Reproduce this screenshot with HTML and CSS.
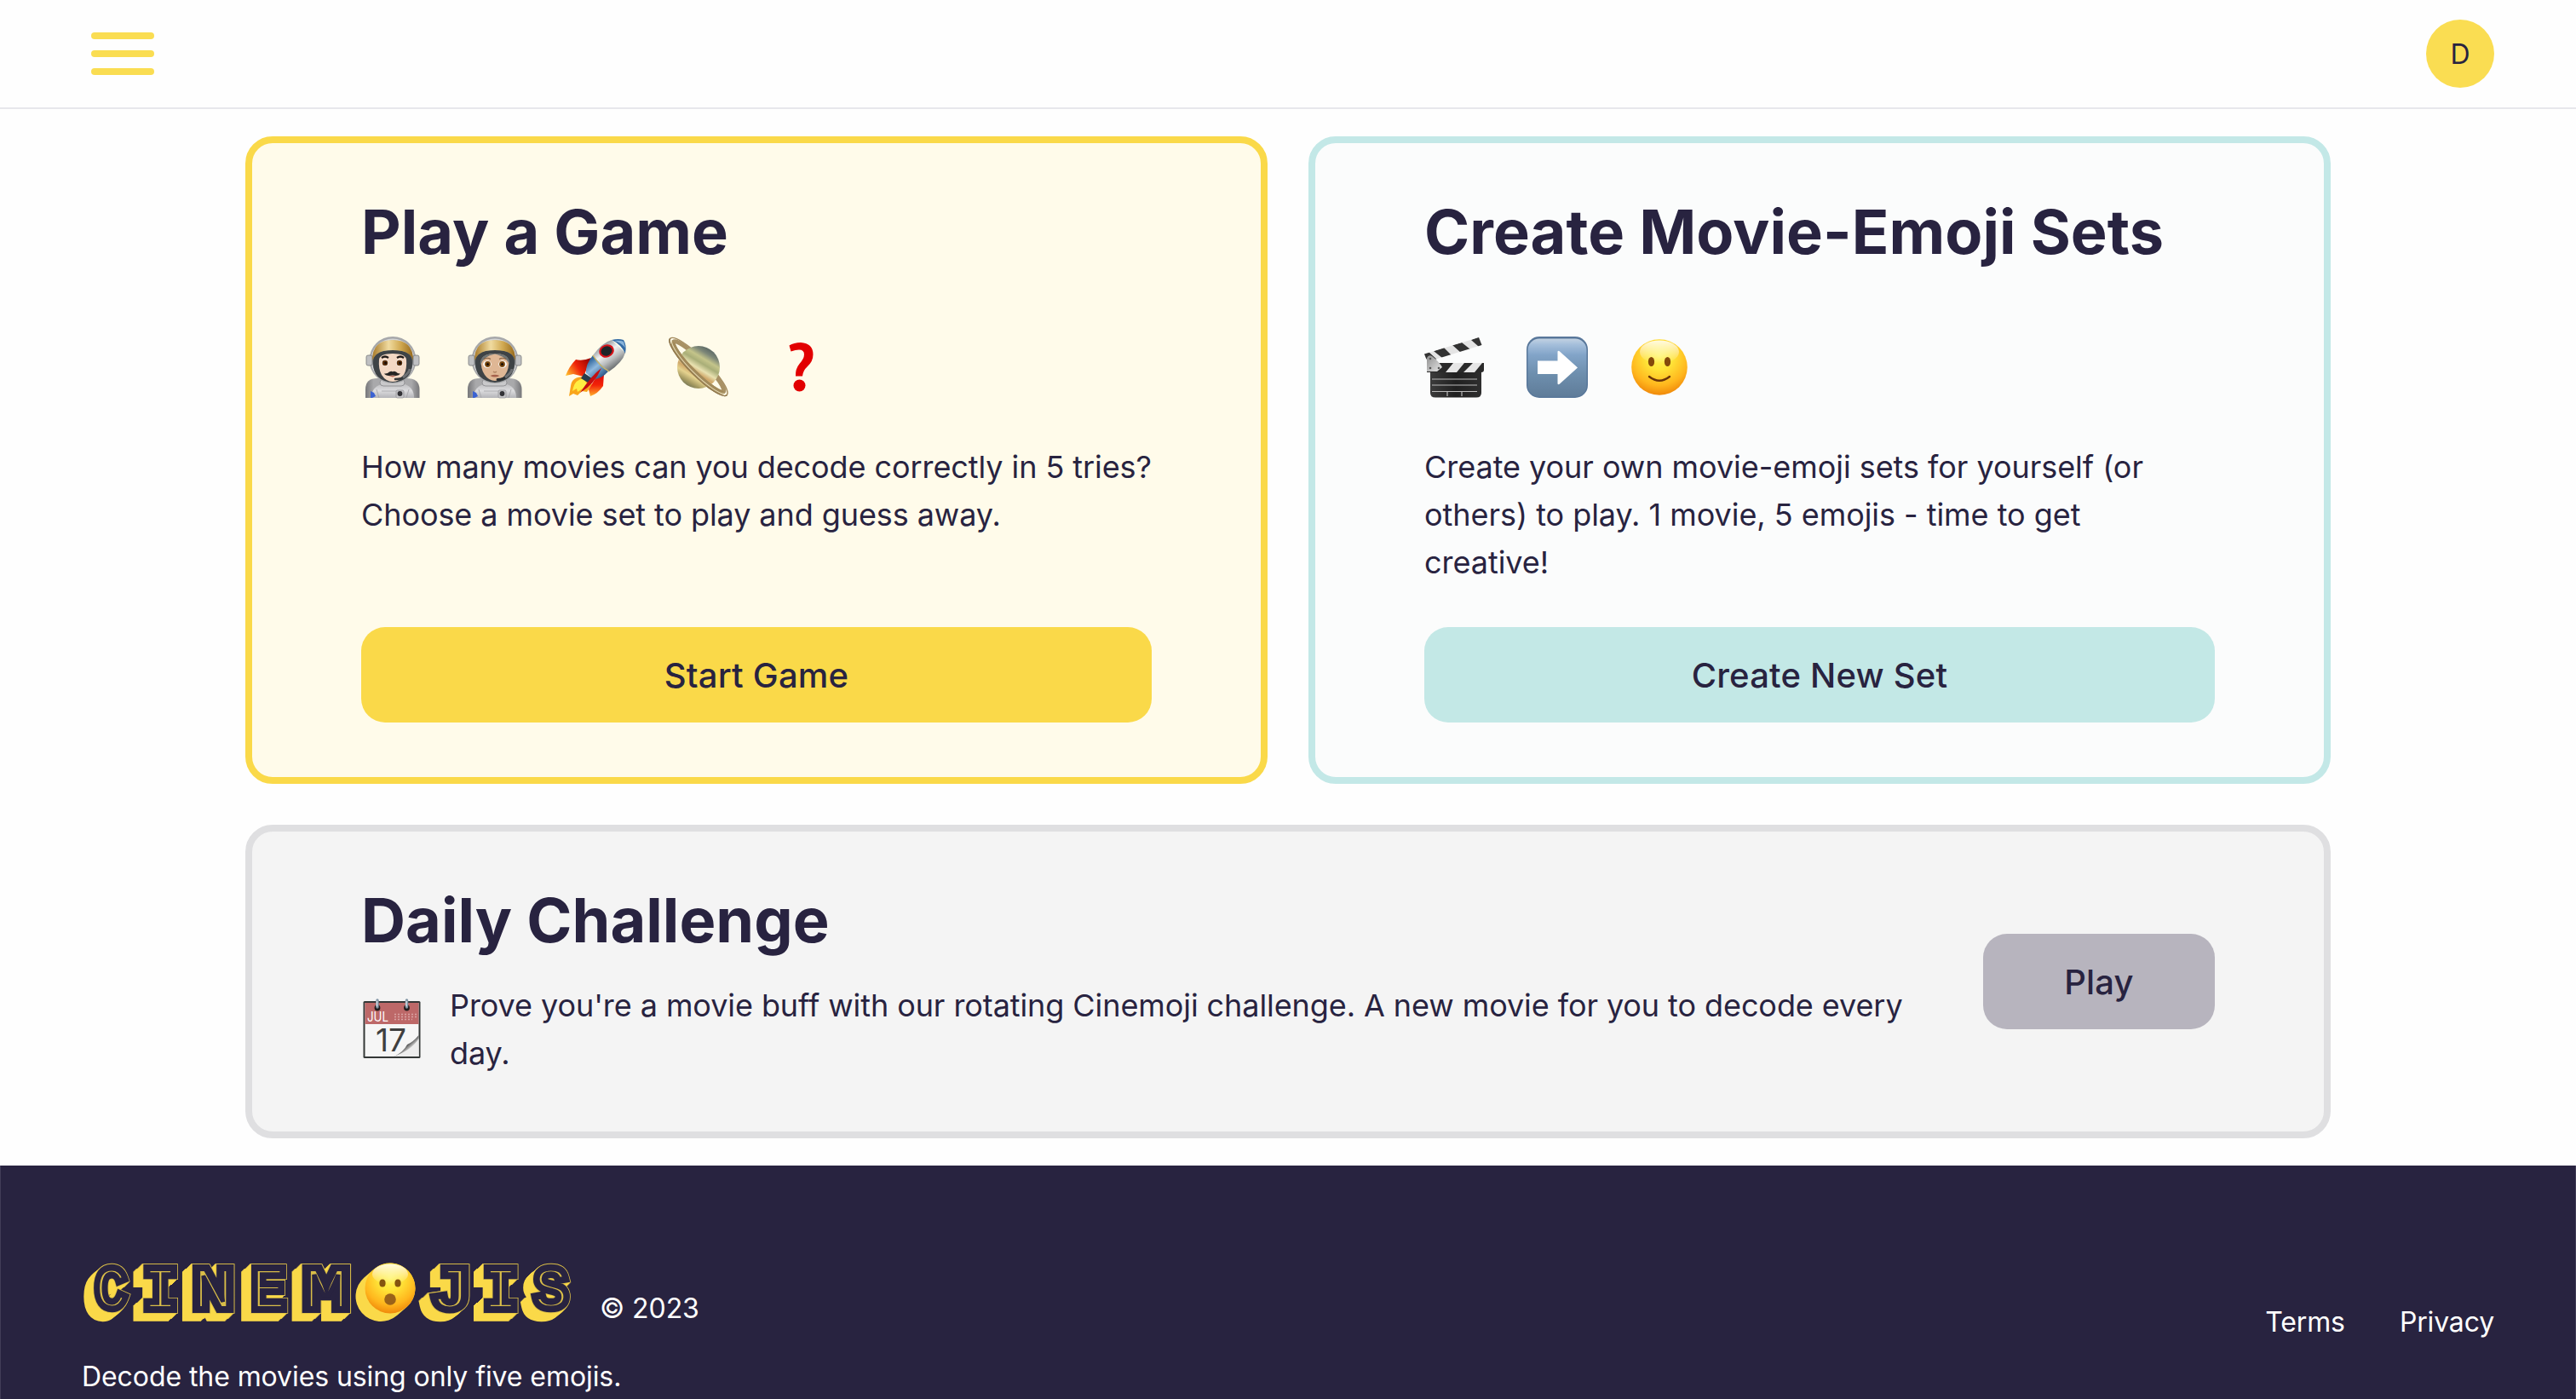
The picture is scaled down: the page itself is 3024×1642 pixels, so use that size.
FILE: index.html
```html
<!DOCTYPE html>
<html lang="en">
<head>
<meta charset="utf-8">
<title>Cinemojis</title>
<link rel="stylesheet" href="styles.css">
</head>
<body>
<header class="topbar">
  <button class="menu" aria-label="Menu"><span class="menu-bar"></span><span class="menu-bar"></span><span class="menu-bar"></span></button>
  <div class="avatar">D</div>
</header>

<main class="main">
  <section class="card card-play">
    <h2 class="title">Play a Game</h2>
    <div class="emojis">
      <svg class="emoji" viewBox="0 0 72 72">
        <defs>
          <linearGradient id="visor" x1="0" y1="0" x2="1" y2="0"><stop offset="0" stop-color="#a87a28"/><stop offset=".4" stop-color="#f0dba0"/><stop offset=".7" stop-color="#d0a850"/><stop offset="1" stop-color="#96691c"/></linearGradient>
          <linearGradient id="suit" x1="0" y1="0" x2="0" y2="1"><stop offset="0" stop-color="#bdbdc0"/><stop offset=".5" stop-color="#dcdcde"/><stop offset="1" stop-color="#b4b4b8"/></linearGradient>
          <linearGradient id="pack" x1="0" y1="0" x2="1" y2="0"><stop offset="0" stop-color="#77777a"/><stop offset=".15" stop-color="#a9a9ab"/><stop offset=".85" stop-color="#a9a9ab"/><stop offset="1" stop-color="#77777a"/></linearGradient>
        </defs>
        <g id="spacesuit">
          <path d="M5 72V62Q5 49 19 49H53Q68.500 49 68.500 62V72Z" fill="url(#pack)"/>
          <path d="M12 72Q12 58 27 55H48Q62 58 62 72Z" fill="url(#suit)"/>
          <rect x="22" y="50" width="29" height="8" rx="4" fill="#c9c9cb" stroke="#88888b" stroke-width=".8"/>
          <path d="M24 64H49M21 72L18 62M53 72L56 62" stroke="#a2a2a6" stroke-width=".8" fill="none"/>
          <path d="M11 64l4 2 2 4-4 2h-2z" fill="#3b62d2"/>
          <rect x="41" y="63" width="9" height="9" rx="1.500" fill="#c5c5c8" stroke="#8f8f93" stroke-width=".7"/>
          <circle cx="45.500" cy="67" r="2.900" fill="#323236"/>
          <circle cx="37" cy="27.500" r="27.500" fill="#a7a8aa"/>
          <circle cx="37" cy="28" r="25.500" fill="#d4d5d7"/>
          <circle cx="37" cy="28.500" r="24" fill="#6d7073"/>
          <rect x="6" y="22" width="7" height="12" rx="2" fill="#bfc0c2" stroke="#77787b" stroke-width=".8"/>
          <rect x="61" y="22" width="7" height="12" rx="2" fill="#bfc0c2" stroke="#77787b" stroke-width=".8"/>
          <path d="M14 31Q13 16 37 16T60 31Q60 52 37 54Q14 52 14 31Z" fill="#3e4346"/>
          <path d="M13 28Q13 4 37 4T61 28Q58 19 48 17Q37 15 26 17Q17 19 13 28Z" fill="url(#visor)"/>
        </g>
        <path d="M21 27Q22 20 37 20T53 27Q54 38 50 45Q45 53 37 53T24 45Q20 38 21 27Z" fill="#f3d8c4"/>
        <path d="M24 25Q28 22 32 25M42 25Q46 22 50 25" stroke="#201a18" stroke-width="2.200" fill="none"/>
        <ellipse cx="28" cy="31" rx="4" ry="3.800" fill="#fff"/><ellipse cx="45" cy="31" rx="4" ry="3.800" fill="#fff"/>
        <circle cx="28" cy="31" r="3.300" fill="#5c310d"/><circle cx="45" cy="31" r="3.300" fill="#5c310d"/>
        <circle cx="28.500" cy="31" r="1.500" fill="#170c05"/><circle cx="45.500" cy="31" r="1.500" fill="#170c05"/>
        <path d="M32 46H41L37 47.500Z" fill="#b66454"/>
        <path d="M27 43.500Q31 44 33 41.500Q36 40 37 41.500Q38 40 41 41.500Q43 44 46 43.500Q44 47 37 45.500Q29 47 27 43.500Z" fill="#262423"/>
        <path d="M40 50Q48 50 51 46" stroke="#36393b" stroke-width="2.500" stroke-linecap="round" fill="none"/>
        <path d="M49 48Q57 42 57 38" stroke="#6f7174" stroke-width="3" fill="none"/>
      </svg>
      <svg class="emoji" viewBox="0 0 72 72">
        <use href="#spacesuit"/>
        <path d="M21 28Q23 20 37 20T53 28Q54 38 49 45Q44 52 37 52T25 45Q20 38 21 28Z" fill="#dfb795"/>
        <path d="M20 34Q18 20 37 20T54 34Q52 24 37 20.500Q23 23 20 34Z" fill="#707575"/>
        <path d="M24 26.500Q28 24 32 26.500M42 26.500Q46 24 50 26.500" stroke="#805c3d" stroke-width="1.200" fill="none"/>
        <ellipse cx="28" cy="32.500" rx="4.800" ry="4.200" fill="#fff"/><ellipse cx="46" cy="32.500" rx="4.800" ry="4.200" fill="#fff"/>
        <circle cx="28.500" cy="32.500" r="3.400" fill="#7a480f"/><circle cx="45.500" cy="32.500" r="3.400" fill="#7a480f"/>
        <circle cx="28.500" cy="32.500" r="1.500" fill="#1a0e05"/><circle cx="45.500" cy="32.500" r="1.500" fill="#1a0e05"/>
        <path d="M35 41Q37 43 39 41" stroke="#b28463" stroke-width="1.200" fill="none"/>
        <path d="M31.500 46Q37 43.500 42.500 46Q37 49 31.500 46Z" fill="#a5604b"/>
        <path d="M40 50.500Q48 50 52 46" stroke="#2c2f31" stroke-width="2.800" stroke-linecap="round" fill="none"/>
        <path d="M49 48Q57 42 57 38" stroke="#6f7174" stroke-width="3" fill="none"/>
      </svg>
      <svg class="emoji" viewBox="0 0 72 72">
        <defs>
          <linearGradient id="hull" gradientUnits="userSpaceOnUse" x1="32" y1="17" x2="50" y2="43"><stop offset="0" stop-color="#8f979c"/><stop offset=".35" stop-color="#f1f2f2"/><stop offset=".65" stop-color="#b9bcbd"/><stop offset="1" stop-color="#626668"/></linearGradient>
          <linearGradient id="hullblue" gradientUnits="userSpaceOnUse" x1="26" y1="30" x2="42" y2="50"><stop offset="0" stop-color="#356a9f"/><stop offset=".4" stop-color="#8fb9de"/><stop offset="1" stop-color="#234f80"/></linearGradient>
          <linearGradient id="fin" gradientUnits="userSpaceOnUse" x1="28" y1="28" x2="2" y2="46"><stop offset="0" stop-color="#9c0500"/><stop offset=".5" stop-color="#f02409"/><stop offset="1" stop-color="#ffbd2c"/></linearGradient>
          <linearGradient id="fin2" x1="0" y1="0" x2="0" y2="1"><stop offset="0" stop-color="#d90808"/><stop offset=".5" stop-color="#f32208"/><stop offset="1" stop-color="#ffb12a"/></linearGradient>
        </defs>
        <path d="M22 47Q7 47 6 58L4 70L9 67L14 69L19 64L25 65L31 56Z" fill="#f9a51b"/>
        <path d="M21 49Q11 51 9 60L8 64L13 61L14 65L26 57Z" fill="#ffee42"/>
        <path d="M30 25Q20 29 12 27Q4 35 0 46L9 44L21 47Z" fill="url(#fin)"/>
        <path d="M35 49L45 44L44 58Q38 67 29 70L27 62Z" fill="url(#fin2)"/>
        <path d="M22 43L31 49L26 54L18 49Z" fill="#293d4c"/>
        <path d="M32 22Q23 33 24 43L32 50Q42 50 50 41Z" fill="url(#hullblue)"/>
        <path d="M32 22Q43 7 54 4L70 19Q67 30 51 41Q43 35 32 22Z" fill="url(#hull)"/>
        <path d="M54 4Q62 2 68 4Q72 10 70 20Q65 9 54 4Z" fill="#356ca5"/>
        <path d="M57 5Q64 4 68 6L70 13Q65 7 57 5Z" fill="#8ab4da"/>
        <path d="M32 22Q40 35 51 41" stroke="#d1b65b" stroke-width="1.400" fill="none"/>
        <ellipse cx="48" cy="17" rx="9" ry="7.500" transform="rotate(-20 48 17)" fill="#d81219"/>
        <ellipse cx="48" cy="17" rx="6.700" ry="5.500" transform="rotate(-20 48 17)" fill="#1e2529"/>
        <path d="M42 37Q30 46 17 66Q34 56 42 37Z" fill="#c50d10"/>
      </svg>
      <svg class="emoji" viewBox="0 0 72 72">
        <defs>
          <linearGradient id="saturn" x1=".8" y1="0" x2=".2" y2="1"><stop offset="0" stop-color="#47565a"/><stop offset=".18" stop-color="#7d8778"/><stop offset=".3" stop-color="#c4c48a"/><stop offset=".4" stop-color="#a9ae78"/><stop offset=".52" stop-color="#e8e1b0"/><stop offset=".62" stop-color="#cfa668"/><stop offset=".72" stop-color="#e5d28e"/><stop offset=".85" stop-color="#a59a62"/><stop offset="1" stop-color="#5b6350"/></linearGradient>
        </defs>
        <g transform="rotate(45 36 35.500)" fill="none">
          <ellipse cx="36" cy="35.500" rx="47" ry="10.500" stroke="#a48b5f" stroke-width="1.400"/>
          <ellipse cx="36" cy="35.500" rx="41.500" ry="7.600" stroke="#a89164" stroke-width="5"/>
        </g>
        <circle cx="36" cy="36" r="25" fill="url(#saturn)"/>
        <g transform="rotate(45 36 35.500)" fill="none">
          <path d="M-11 35.500A47 10.500 0 0 0 83 35.500" stroke="#8c744a" stroke-width="1.400"/>
          <path d="M-5.500 35.500A41.500 7.600 0 0 0 77.500 35.500" stroke="#a28a5a" stroke-width="5"/>
          <path d="M-8 36A44.500 9.700 0 0 0 80 36" stroke="#e4d8b3" stroke-width="1"/>
        </g>
      </svg>
      <svg class="emoji" viewBox="0 0 72 72">
        <path d="M22.500 10.500Q28 7 36 7Q50.500 8 50.500 21Q50.500 29 44 35Q38.500 40 38 46.500H30Q29.500 38 34.500 32Q40 26 40 21Q40 15.500 34 15.500Q30 15.500 24.500 17.500Z" fill="#e20000"/>
        <circle cx="34.500" cy="57.500" r="7" fill="#e20000"/>
      </svg>
    </div>
    <p class="text">How many movies can you decode correctly in 5 tries? Choose a movie set to play and guess away.</p>
    <button class="btn btn-yellow">Start Game</button>
  </section>

  <section class="card card-create">
    <h2 class="title">Create Movie-Emoji Sets</h2>
    <div class="emojis">
      <svg class="emoji" viewBox="0 0 72 72">
        <defs>
          <linearGradient id="slate" x1="0" y1="0" x2="1" y2="0"><stop offset="0" stop-color="#3b3b3b"/><stop offset=".5" stop-color="#202020"/><stop offset="1" stop-color="#2e2e2e"/></linearGradient>
          <linearGradient id="plate" x1="0" y1="0" x2="1" y2="1"><stop offset="0" stop-color="#8e8e8e"/><stop offset="1" stop-color="#e8e8e8"/></linearGradient>
          <clipPath id="arm"><path d="M0 20.500L64 1L67.500 10L9 28L3 28Z"/></clipPath>
          <clipPath id="bar"><path d="M3 31H70V39Q70 42 67 42H3Z"/></clipPath>
        </defs>
        <g clip-path="url(#arm)">
          <rect width="72" height="30" fill="#e4e4e4"/>
          <path d="M-4 20L4 17L16 28H4ZM11 17L23 13L32 22L21 25ZM33 10L44 7L54 15L43 19ZM55 4L65 0L70 9L64 12Z" fill="#333"/>
        </g>
        <path d="M7 42H67V66Q67 71.500 61 71.500H13Q7 71.500 7 66Z" fill="url(#slate)"/>
        <g clip-path="url(#bar)">
          <rect y="30" width="72" height="13" fill="#2a2a2a"/>
          <path d="M34 31H47L38 42H25ZM57 31H68L59 42H46Z" fill="#e6e6e6"/>
        </g>
        <path d="M3 41V25Q5 21 9 23Q17 29 21 36L15 41Z" fill="url(#plate)"/>
        <g fill="#555"><circle cx="7" cy="26" r="1.300"/><circle cx="7" cy="37" r="1.300"/><circle cx="17" cy="37" r="1.300"/></g>
        <path d="M9 50H62M9 57H62M9 64.500H62M27 64.500V70M44 64.500V70" stroke="#b9b9b9" stroke-width="1.200" fill="none"/>
      </svg>
      <svg class="emoji" viewBox="0 0 72 72">
        <defs>
          <linearGradient id="tile" x1="0" y1="0" x2="0" y2="1"><stop offset="0" stop-color="#c3d2e2"/><stop offset=".1" stop-color="#a5bfdb"/><stop offset=".28" stop-color="#82a4c8"/><stop offset=".6" stop-color="#6e8fae"/><stop offset="1" stop-color="#5f7c99"/></linearGradient>
        </defs>
        <rect width="72" height="72" rx="15" fill="#58779a"/>
        <rect x="1.500" y="2.500" width="69" height="68" rx="13.500" fill="url(#tile)"/>
        <path d="M13 28.500H36.500V17.500Q37.500 16 39 17.500L60 36.500L39 55.500Q37.500 57 36.500 55.500V44H13Z" fill="#fff"/>
      </svg>
      <svg class="emoji" viewBox="0 0 72 72">
        <defs>
          <radialGradient id="face" cx=".5" cy=".3" r=".7"><stop offset="0" stop-color="#fff45c"/><stop offset=".35" stop-color="#ffe438"/><stop offset=".75" stop-color="#ffb61d"/><stop offset="1" stop-color="#f0890a"/></radialGradient>
          <linearGradient id="gloss" x1="0" y1="0" x2="0" y2="1"><stop offset="0" stop-color="#fff" stop-opacity=".85"/><stop offset="1" stop-color="#fff" stop-opacity="0"/></linearGradient>
        </defs>
        <circle cx="36" cy="36" r="32.800" fill="url(#face)"/>
        <ellipse cx="36" cy="18" rx="23" ry="13.500" fill="url(#gloss)"/>
        <ellipse cx="26.500" cy="29.500" rx="3.600" ry="5.500" fill="#84490b"/><ellipse cx="45.500" cy="29.500" rx="3.600" ry="5.500" fill="#84490b"/>
        <path d="M24 47Q36 56.500 48 47" stroke="#6b3408" stroke-width="2.400" stroke-linecap="round" fill="none"/>
      </svg>
    </div>
    <p class="text">Create your own movie-emoji sets for yourself (or others) to play. 1 movie, 5 emojis - time to get creative!</p>
    <button class="btn btn-teal">Create New Set</button>
  </section>

  <section class="card card-daily">
    <div class="daily-body">
      <h2 class="title">Daily Challenge</h2>
      <div class="daily-row">
        <svg class="emoji" viewBox="0 0 72 72">
          <defs>
            <linearGradient id="curl" x1="0" y1="0" x2="1" y2="1"><stop offset=".3" stop-color="#f2f2f2"/><stop offset=".5" stop-color="#5c5c5c"/><stop offset=".64" stop-color="#d5d5d5"/><stop offset="1" stop-color="#fff"/></linearGradient>
          </defs>
          <rect x="2.500" y="3" width="67" height="67" rx="1.500" fill="#343837"/>
          <rect x="4.500" y="5" width="63" height="63" fill="#f6f6f6"/>
          <rect x="4.500" y="5" width="63" height="25" fill="#bd6868"/>
          <path d="M39 18.500H65M39 21.500H65M39 24.500H60" stroke="#d9a3a3" stroke-width="1.500" stroke-dasharray="2 2"/>
          <path d="M39 68Q50 62 54 54Q61 51 67.500 43V68Z" fill="url(#curl)"/>
          <text class="cal-month" x="7" y="26.500" textLength="25" lengthAdjust="spacingAndGlyphs">JUL</text>
          <text class="cal-day" x="17" y="61.500" textLength="36" lengthAdjust="spacingAndGlyphs">17</text>
          <path d="M38 68H67.500V47Q60 60 38 68Z" fill="#ededed"/>
          <circle cx="19" cy="11" r="3.400" fill="#211c1c"/><circle cx="53.500" cy="11" r="3.400" fill="#211c1c"/>
          <path d="M19 2V10M53.500 2V10" stroke="#7f93a3" stroke-width="3.400" stroke-linecap="round"/>
          <path d="M18.500 3V9M53 3V9" stroke="#e3edf4" stroke-width="1.200" stroke-linecap="round"/>
        </svg>
        <p class="text">Prove you're a movie buff with our rotating Cinemoji challenge. A new movie for you to decode every day.</p>
      </div>
    </div>
    <button class="btn btn-grey">Play</button>
  </section>
</main>

<footer class="footer">
  <div class="brand">
    <div class="brand-row">
      <svg class="logo" viewBox="0 0 576 80" role="img" aria-label="Cinemojis">
        <g class="logo-side">
          <use href="#word" x="-11" y="9.500"/><use href="#word" x="-10" y="8.600"/><use href="#word" x="-9" y="7.800"/><use href="#word" x="-8" y="6.900"/><use href="#word" x="-7" y="6"/><use href="#word" x="-6" y="5.200"/><use href="#word" x="-5" y="4.300"/><use href="#word" x="-4" y="3.500"/><use href="#word" x="-3" y="2.600"/><use href="#word" x="-2" y="1.700"/><use href="#word" x="-1" y=".9"/>
        </g>
        <use class="logo-rim" href="#word"/>
        <use class="logo-face" href="#word"/>
        <g class="logo-line"><g id="word">
          <text transform="translate(16,54.300) scale(.92,1.020)">C</text>
          <text transform="translate(71.400,54.500) scale(1.050,1.040)">I</text>
          <text transform="translate(130.600,54.500) scale(1.200,1.040)">N</text>
          <text transform="translate(199.500,54.500) scale(1,1.040)">E</text>
          <text transform="translate(260.700,54.500) scale(1.320,1.040)">M</text>
          <text transform="translate(408.800,54.500) scale(1.220,1.040)">J</text>
          <text transform="translate(470.900,54.500) scale(1.050,1.040)">I</text>
          <text transform="translate(531,54.300) scale(1,1.020)">S</text>
        </g></g>
        <use class="logo-inset" href="#word"/>
        <path d="M351 41.500L362 32" stroke="#fad949" stroke-width="59" stroke-linecap="round"/>
        <circle cx="362" cy="32" r="29.500" fill="url(#face)"/>
        <ellipse cx="362" cy="15.500" rx="21" ry="12" fill="url(#gloss)"/>
        <ellipse cx="353" cy="26" rx="3.600" ry="4.500" fill="#84540f"/><ellipse cx="371" cy="26" rx="3.600" ry="4.500" fill="#84540f"/>
        <circle cx="362" cy="45" r="6.800" fill="#9a6219"/>
      </svg>
      <span class="copy">© 2023</span>
    </div>
    <p class="tagline">Decode the movies using only five emojis.</p>
  </div>
  <nav class="links"><a class="link">Terms</a><a class="link">Privacy</a></nav>
</footer>
</body>
</html>
```
FILE: styles.css
```css
* { box-sizing: border-box; margin: 0; padding: 0; }

body {
  width: 3024px;
  height: 1642px;
  overflow: hidden;
  background: #fefefe;
  color: #282340;
  font-family: Inter, "Liberation Sans", sans-serif;
}

button { border: 0; font: inherit; color: inherit; }

.topbar {
  height: 128px;
  padding: 0 96px 0 107px;
  border-bottom: 2px solid #e7e7ec;
  display: flex;
  align-items: center;
  justify-content: space-between;
}
.menu { display: flex; flex-direction: column; gap: 13px; background: none; }
.menu-bar { width: 74px; height: 8px; border-radius: 4px; background: #fadd52; }
.avatar {
  width: 80px;
  height: 80px;
  border-radius: 50%;
  background: #fadd52;
  display: flex;
  align-items: center;
  justify-content: center;
  font-size: 32px;
}

.main {
  width: 2448px;
  margin: 0 auto;
  padding: 32px 0;
  display: grid;
  grid-template-columns: 1fr 1fr;
  gap: 48px;
}
.card { border: 8px solid; border-radius: 32px; padding: 64px 128px; display: flex; }
.card-play, .card-create { flex-direction: column; height: 760px; }
.card-play { border-color: #fad949; background: #fffbea; }
.card-create { border-color: #c3e8e7; background: #fbfcfc; }
.card-daily {
  grid-column: 1 / -1;
  border-color: #dfdfe1;
  background: #f4f4f4;
  align-items: center;
  justify-content: space-between;
  gap: 64px;
}

.title { font-size: 72px; line-height: 80px; font-weight: 700; letter-spacing: 0.05px; }
.emojis { display: flex; gap: 48px; margin: 83px 0 53px; }
.emoji { width: 72px; height: 72px; flex: none; display: block; overflow: visible; }
.text { font-size: 36px; line-height: 56px; letter-spacing: -0.08px; }
.card-play .text { margin-right: -8px; }
.card-create .text { padding-right: 24px; letter-spacing: -0.04px; }

.btn { height: 112px; border-radius: 28px; font-size: 40px; font-weight: 500; letter-spacing: 0.2px; flex: none; }
.card-play .btn, .card-create .btn { margin-top: auto; }
.btn-yellow { background: #fad949; }
.btn-teal { background: #c3e8e6; }
.btn-grey { background: #b7b4be; width: 272px; }

.daily-row { display: flex; align-items: center; gap: 32px; margin-top: 32px; }
.cal-month { font: 16px Inter, sans-serif; fill: #fff; }
.cal-day { font: 37px Inter, sans-serif; fill: #3f3f3f; }

.footer {
  height: 274px;
  padding: 112px 95px 0;
  background: #282340;
  color: #fff;
  border-right: 1px solid #413c57;
  border-left: 1px solid #413c57;
  display: flex;
  justify-content: space-between;
  font-size: 32px;
  line-height: 48px;
  letter-spacing: -0.08px;
}
.brand-row { display: flex; gap: 32px; }
.logo { width: 576px; height: 80px; overflow: visible; font: 66px "Liberation Mono", monospace; }
.copy { margin-top: 32px; }
.tagline { margin-top: 32px; }
.links { display: flex; gap: 64px; margin-top: 48px; letter-spacing: -0.15px; }

.logo-side { fill: #fad949; stroke: #fad949; stroke-width: 13px; stroke-miterlimit: 2; }
.logo-rim { fill: #fad949; stroke: #d9bd48; stroke-width: 13px; stroke-miterlimit: 2; }
.logo-face { fill: #282340; stroke: #282340; stroke-width: 11.4px; stroke-miterlimit: 2; }
.logo-line { fill: #d9bd48; }
.logo-inset { fill: none; stroke: #282340; stroke-width: 4px; }
```
